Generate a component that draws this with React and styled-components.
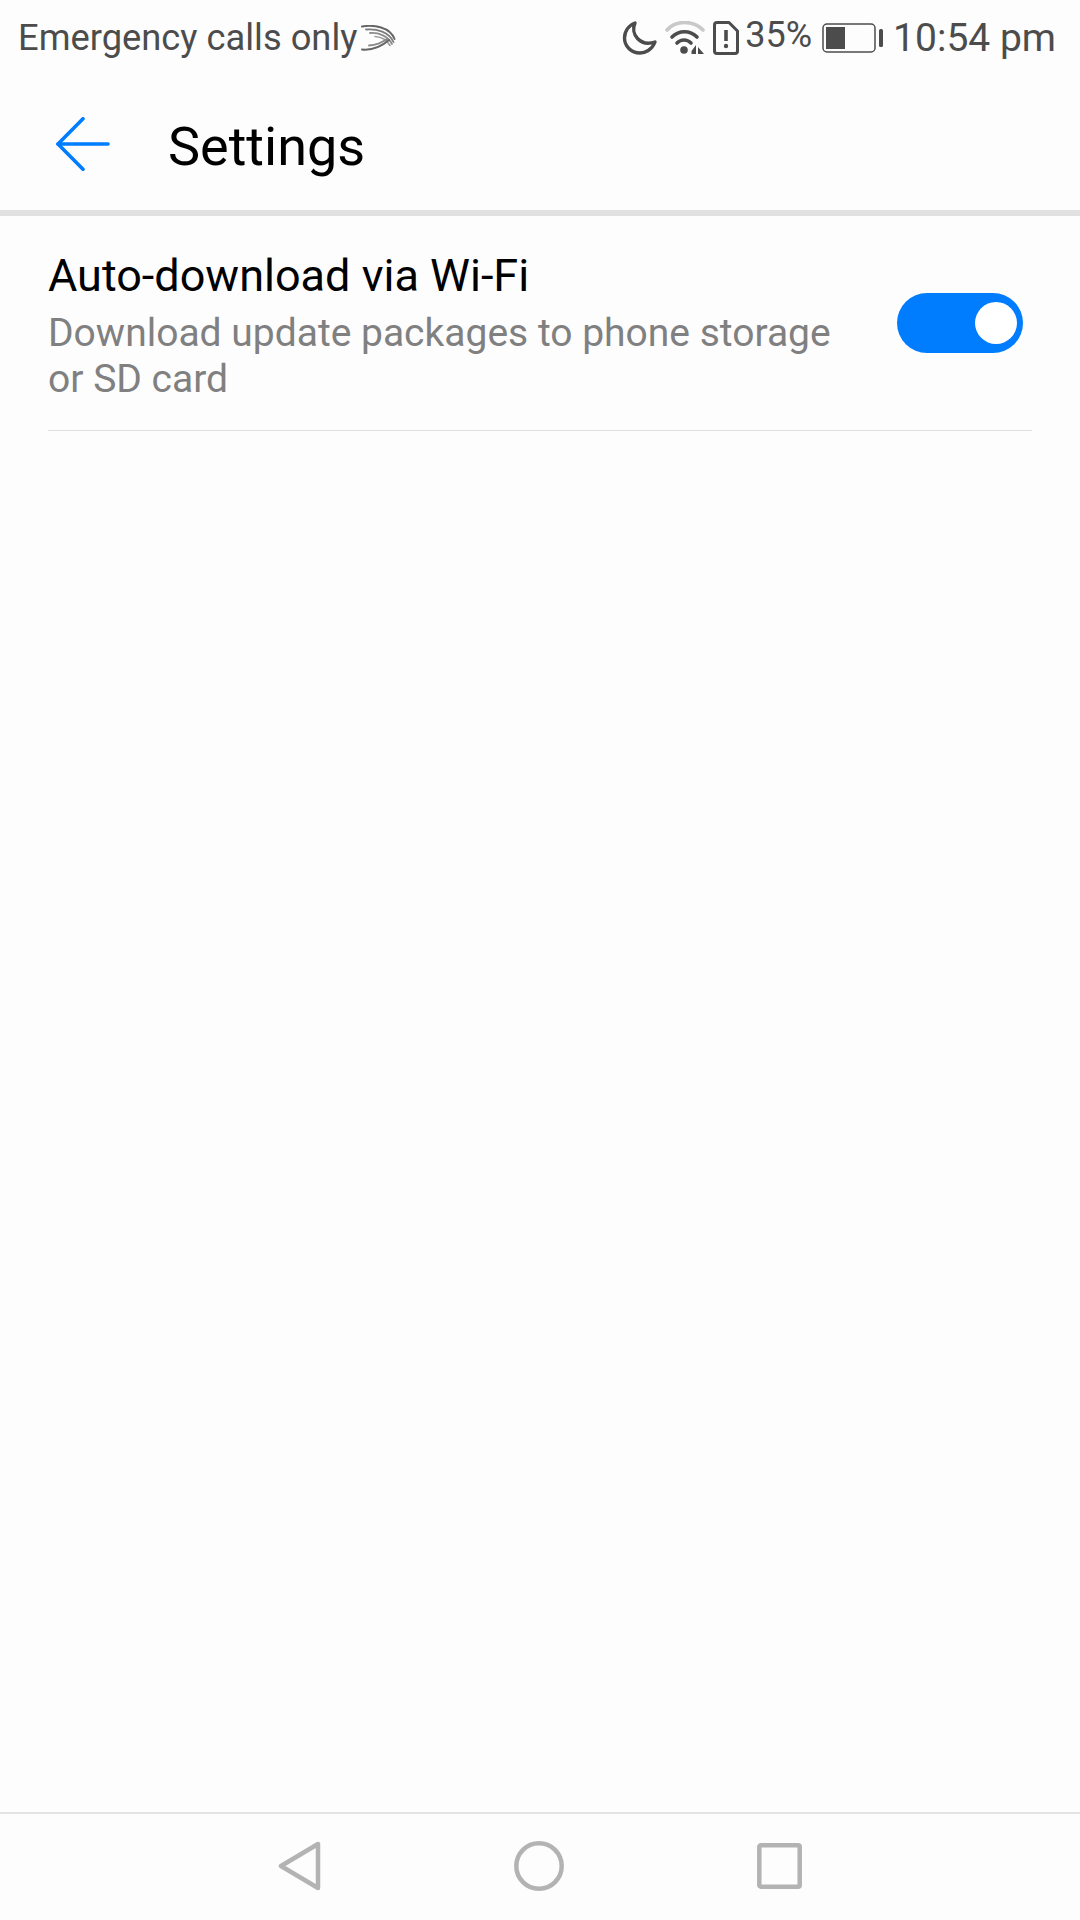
import { useState } from 'react';
import styled, { createGlobalStyle } from 'styled-components';

const GlobalStyle = createGlobalStyle`
  html, body {
    margin: 0;
    padding: 0;
    background: #fdfdfd;
  }
  * {
    box-sizing: border-box;
  }
`;

const Screen = styled.div`
  width: 1080px;
  height: 1920px;
  display: flex;
  flex-direction: column;
  background: #fdfdfd;
  font-family: Roboto, "Noto Sans", sans-serif;
  overflow: hidden;
`;

const StatusBar = styled.div`
  height: 72px;
  display: flex;
  align-items: center;
  justify-content: space-between;
  padding: 3px 24px 0 18px;
  color: #4c4c4c;
`;

const StatusGroup = styled.div`
  display: flex;
  align-items: center;
`;

const StatusText = styled.span`
  font-size: ${(p) => p.$size}px;
  line-height: 44px;
  white-space: nowrap;
  margin-left: ${(p) => p.$left || 0}px;
  transform: translateY(${(p) => p.$lift || 0}px);
`;

const Icon = styled.svg`
  display: block;
  flex: none;
  margin-left: ${(p) => p.$left || 0}px;
`;

const Toolbar = styled.header`
  height: 144px;
  display: flex;
  align-items: center;
  padding: 6px 0 0 56px;
  border-bottom: 6px solid #e1e1e1;
`;

const BackButton = styled.button`
  display: block;
  width: 112px;
  padding: 0;
  border: 0;
  background: none;
`;

const Title = styled.h1`
  margin: 6px 0 0;
  font-size: 54px;
  font-weight: 400;
  line-height: 60px;
  color: #000;
`;

const Row = styled.div`
  height: 215px;
  margin: 0 48px;
  display: flex;
  align-items: flex-start;
  justify-content: space-between;
  border-bottom: 1px solid #e0e0e0;
`;

const RowText = styled.div`
  width: 810px;
  padding-top: 35px;
`;

const RowTitle = styled.div`
  font-size: 45px;
  line-height: 50px;
  color: #000;
`;

const RowHint = styled.div`
  margin-top: 9px;
  font-size: 39px;
  line-height: 46px;
  color: #808080;
`;

const Toggle = styled.button`
  width: 126px;
  height: 60px;
  margin: 77px 9px 0 0;
  padding: 9px 6px;
  display: flex;
  justify-content: ${(p) => (p.$on ? 'flex-end' : 'flex-start')};
  border: 0;
  border-radius: 30px;
  background: ${(p) => (p.$on ? '#007dff' : '#c4c4c4')};
`;

const Knob = styled.span`
  display: block;
  width: 42px;
  height: 42px;
  border-radius: 50%;
  background: #fff;
`;

const Spacer = styled.div`
  flex: 1;
`;

const NavBar = styled.nav`
  height: 108px;
  display: flex;
  align-items: center;
  justify-content: center;
  padding-bottom: 2px;
  gap: 193px;
  border-top: 2px solid #e4e4e4;
`;

const SwiftKeyIcon = () => (
  <Icon $left={4} width="35" height="26" viewBox="0 0 35 26" fill="none" strokeLinecap="round">
    <path d="M1 1.500C13 -0.500 29 2 33.500 14" stroke="#666" strokeWidth="2" />
    <path d="M5 4.500C16 3.500 28 7 32.500 17" stroke="#7c7c7c" strokeWidth="1.800" />
    <path d="M9 8C18 7.500 27 11 31 19" stroke="#8c8c8c" strokeWidth="1.800" />
    <path d="M14 11.500C20 12 26 15 29 20.500" stroke="#9c9c9c" strokeWidth="1.600" />
    <path d="M1 24.500C11 25.500 21 21 28 15" stroke="#666" strokeWidth="2" />
    <path d="M8 20.500C15 20 21 17.500 26 14" stroke="#888" strokeWidth="1.800" />
  </Icon>
);

const MoonIcon = () => (
  <Icon width="36" height="36" viewBox="0 0 36 36" fill="none" stroke="#4c4c4c" strokeWidth="3.4" strokeLinejoin="round">
    <path d="M13 3C8 14 18 27 33 22C30 30 23 33 18 33C9 33 2.500 26 2.500 18C2.500 11 7 5 13 3Z" />
  </Icon>
);

const WifiIcon = () => (
  <Icon $left={7} width="42" height="34" viewBox="0 0 42 34" fill="none" strokeLinecap="round">
    <path d="M2 9C11 -1 28 -1 38 9" stroke="#c9c9c9" strokeWidth="3.600" />
    <path d="M7 16C14 9 25 9 32 16" stroke="#4c4c4c" strokeWidth="3.600" />
    <path d="M12 22C16 18 22 18 26 22" stroke="#4c4c4c" strokeWidth="3.600" />
    <circle cx="19" cy="29" r="3.800" fill="#4c4c4c" />
    <path d="M31 24V33H26.500V30ZM33 26V33H39Z" fill="#4c4c4c" />
  </Icon>
);

const SimAlertIcon = () => (
  <Icon $left={6} width="26" height="34" viewBox="0 0 26 34" fill="none">
    <path d="M4 1.500H16L24.500 10V30C24.500 31.500 23.500 32.500 22 32.500H4C2.500 32.500 1.500 31.500 1.500 30V4C1.500 2.500 2.500 1.500 4 1.500Z" stroke="#4c4c4c" strokeWidth="3" strokeLinejoin="round" />
    <path d="M13 9V20" stroke="#4c4c4c" strokeWidth="3.600" />
    <circle cx="13" cy="25" r="2.200" fill="#4c4c4c" />
  </Icon>
);

const BatteryIcon = () => (
  <Icon $left={10} width="62" height="30" viewBox="0 0 62 30" fill="none">
    <rect x="1" y="1" width="52" height="28" rx="4" stroke="#4c4c4c" strokeWidth="1.500" />
    <rect x="4" y="4" width="19" height="22" fill="#4c4c4c" />
    <rect x="57" y="6" width="4" height="18" rx="1.500" fill="#4c4c4c" />
  </Icon>
);

const BackArrow = () => (
  <svg width="54" height="54" viewBox="0 0 54 54" fill="none" stroke="#007dff" strokeWidth="3.600" strokeLinecap="round" strokeLinejoin="round" style={{ display: 'block' }}>
    <path d="M2 27H52" />
    <path d="M27 1.800L2 27L27 52.200" />
  </svg>
);

const NavBack = () => (
  <Icon width="43" height="50" viewBox="0 0 43 50" fill="none" stroke="#b3b3b3" strokeWidth="4.500" strokeLinejoin="round">
    <path d="M40 3V47L3 25Z" />
  </Icon>
);

const NavHome = () => (
  <Icon width="50" height="50" viewBox="0 0 50 50" fill="none" stroke="#b3b3b3" strokeWidth="4.500">
    <circle cx="25" cy="25" r="22.700" />
  </Icon>
);

const NavRecent = () => (
  <Icon width="45" height="46" viewBox="0 0 45 46" fill="none" stroke="#b3b3b3" strokeWidth="4.500" strokeLinejoin="round">
    <rect x="2.300" y="2.300" width="40.400" height="41.400" rx="1.500" />
  </Icon>
);

export default function App() {
  const [autoDownload, setAutoDownload] = useState(true);

  return (
    <Screen>
      <GlobalStyle />
      <StatusBar>
        <StatusGroup>
          <StatusText $size={36.3}>Emergency calls only</StatusText>
          <SwiftKeyIcon />
        </StatusGroup>
        <StatusGroup>
          <MoonIcon />
          <WifiIcon />
          <SimAlertIcon />
          <StatusText $size={36} $left={6} $lift={-3}>35%</StatusText>
          <BatteryIcon />
          <StatusText $size={39} $left={9}>10:54 pm</StatusText>
        </StatusGroup>
      </StatusBar>

      <Toolbar>
        <BackButton aria-label="Back">
          <BackArrow />
        </BackButton>
        <Title>Settings</Title>
      </Toolbar>

      <Row>
        <RowText>
          <RowTitle>Auto-download via Wi-Fi</RowTitle>
          <RowHint>Download update packages to phone storage or SD card</RowHint>
        </RowText>
        <Toggle $on={autoDownload} aria-label="Auto-download via Wi-Fi" onClick={() => setAutoDownload(!autoDownload)}>
          <Knob />
        </Toggle>
      </Row>

      <Spacer />

      <NavBar>
        <NavBack />
        <NavHome />
        <NavRecent />
      </NavBar>
    </Screen>
  );
}
